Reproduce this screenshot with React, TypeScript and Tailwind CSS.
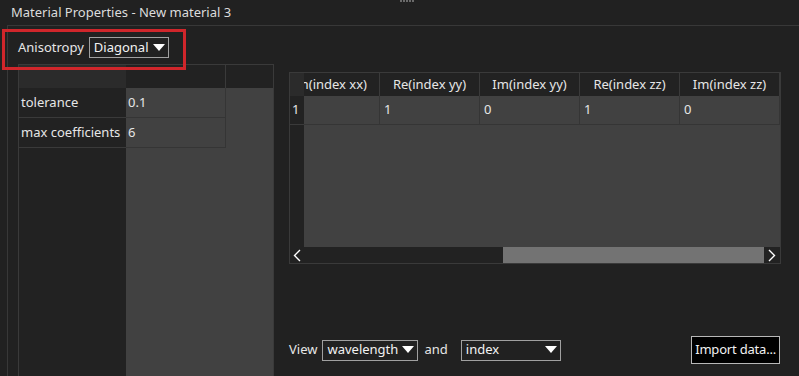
import React from "react"

const Tri = () => (
  <svg width="12" height="8" viewBox="0 0 12 8" className="shrink-0">
    <polygon points="0,0 12,0 6,7" fill="#ffffff" />
  </svg>
)

function Combo({ label, width }: { label: string; width: string }) {
  return (
    <div
      className={`${width} h-[21px] border border-[#a0a0a0] flex items-center justify-between pl-[4px] pr-[3px] text-[#f2f2f2]`}
    >
      <span>{label}</span>
      <Tri />
    </div>
  )
}

const columns = ["Im(index xx)", "Re(index yy)", "Im(index yy)", "Re(index zz)", "Im(index zz)"]
const values = ["", "1", "0", "1", "0"]

export default function App() {
  return (
    <div
      className="w-[799px] h-[376px] bg-[#212121] relative overflow-hidden text-[13px] text-[#e6e6e6]"
      style={{ fontFamily: "'Noto Sans', sans-serif" }}
    >
      {/* splitter grip */}
      <div className="absolute top-0 left-[400px] flex gap-[1px]">
        {[0, 1, 2, 3, 4].map((i) => (
          <div key={i} className="w-[2px] h-[2px] bg-[#6a6a6a]" />
        ))}
      </div>

      <div className="h-[25px] pl-[11px] flex items-center text-[#dcdcdc]">
        Material Properties - New material 3
      </div>

      <div className="ml-[7px] h-[351px] border-t border-l border-[#383838]">
        <div className="h-[38px] pl-[10px] pt-[11px] flex items-start gap-[5px]">
          <span className="leading-[21px]">Anisotropy</span>
          <Combo label="Diagonal" width="w-[80px]" />
        </div>

        <div className="flex pl-[10px] gap-[15px]">
          {/* left parameters table */}
          <div className="w-[256px] h-[320px] border border-[#3a3a3a] flex flex-col">
            <div className="h-[23px] flex bg-[#222222]">
              <div className="w-[107px] bg-[#2b2b2b]" />
              <div className="w-[100px] border-r border-[#3a3a3a]" />
              <div className="flex-1" />
            </div>
            <div className="flex flex-1">
              <div className="w-[107px] bg-[#222222]">
                {["tolerance", "max coefficients"].map((t) => (
                  <div key={t} className="h-[30px] border-b border-[#3a3a3a] pl-[2px] flex items-center">
                    {t}
                  </div>
                ))}
              </div>
              <div className="flex-1 bg-[#414141]">
                {["0.1", "6"].map((v) => (
                  <div
                    key={v}
                    className="w-[100px] h-[30px] border-b border-r border-[#353535] pl-[2px] flex items-center"
                  >
                    {v}
                  </div>
                ))}
              </div>
            </div>
          </div>

          {/* right data table */}
          <div className="flex flex-col pt-[8px] w-[492px]">
            <div className="h-[192px] border border-[#3a3a3a] flex flex-col">
              <div className="h-[23px] flex bg-[#222222] overflow-hidden">
                <div className="w-[14px] shrink-0 bg-[#2b2b2b]" />
                <div className="w-[76px] shrink-0 border-r border-[#3a3a3a] overflow-hidden flex items-center justify-end pr-[12px] whitespace-nowrap">
                  <span>{columns[0]}</span>
                </div>
                {columns.slice(1).map((c) => (
                  <div
                    key={c}
                    className="w-[100px] shrink-0 border-r border-[#3a3a3a] flex items-center justify-center whitespace-nowrap"
                  >
                    {c}
                  </div>
                ))}
              </div>
              <div className="h-[29px] flex">
                <div className="w-[14px] shrink-0 bg-[#222222] border-b border-[#3a3a3a] flex items-center pl-[2px]">
                  1
                </div>
                <div className="flex bg-[#414141] flex-1">
                  {values.map((v, i) => (
                    <div
                      key={i}
                      className={`${i === 0 ? "w-[76px]" : "w-[100px]"} shrink-0 border-r border-b border-[#353535] pl-[4px] flex items-center`}
                    >
                      {v}
                    </div>
                  ))}
                </div>
              </div>
              <div className="flex-1 flex">
                <div className="w-[14px] bg-[#222222]" />
                <div className="flex-1 bg-[#414141]" />
              </div>
              <div className="h-[16px] flex items-center bg-[#222222]">
                <div className="w-[14px] flex justify-center">
                  <svg width="8" height="13" viewBox="0 0 8 13">
                    <polyline points="7,1 1.5,6.5 7,12" fill="none" stroke="#ffffff" strokeWidth="1.4" />
                  </svg>
                </div>
                <div className="flex-1 h-full flex">
                  <div className="w-[199px]" />
                  <div className="w-[261px] bg-[#737373]" />
                </div>
                <div className="w-[16px] flex justify-center">
                  <svg width="8" height="13" viewBox="0 0 8 13">
                    <polyline points="1,1 6.5,6.5 1,12" fill="none" stroke="#ffffff" strokeWidth="1.4" />
                  </svg>
                </div>
              </div>
            </div>

            <div className="mt-[72px] flex items-center">
              <span className="mr-[5px]">View</span>
              <Combo label="wavelength" width="w-[96px]" />
              <span className="ml-[6px] mr-[13px]">and</span>
              <Combo label="index" width="w-[100px]" />
              <div className="ml-auto mr-[1px] h-[28px] px-[3px] bg-black border border-[#b8b8b8] flex items-center text-[#f2f2f2] tracking-[-0.2px]">
                Import data...
              </div>
            </div>
          </div>
        </div>
      </div>

      {/* annotation highlight */}
      <div className="absolute left-[2px] top-[29px] w-[184px] h-[41px] border-[3px] border-[#d0262b] pointer-events-none" />
    </div>
  )
}
